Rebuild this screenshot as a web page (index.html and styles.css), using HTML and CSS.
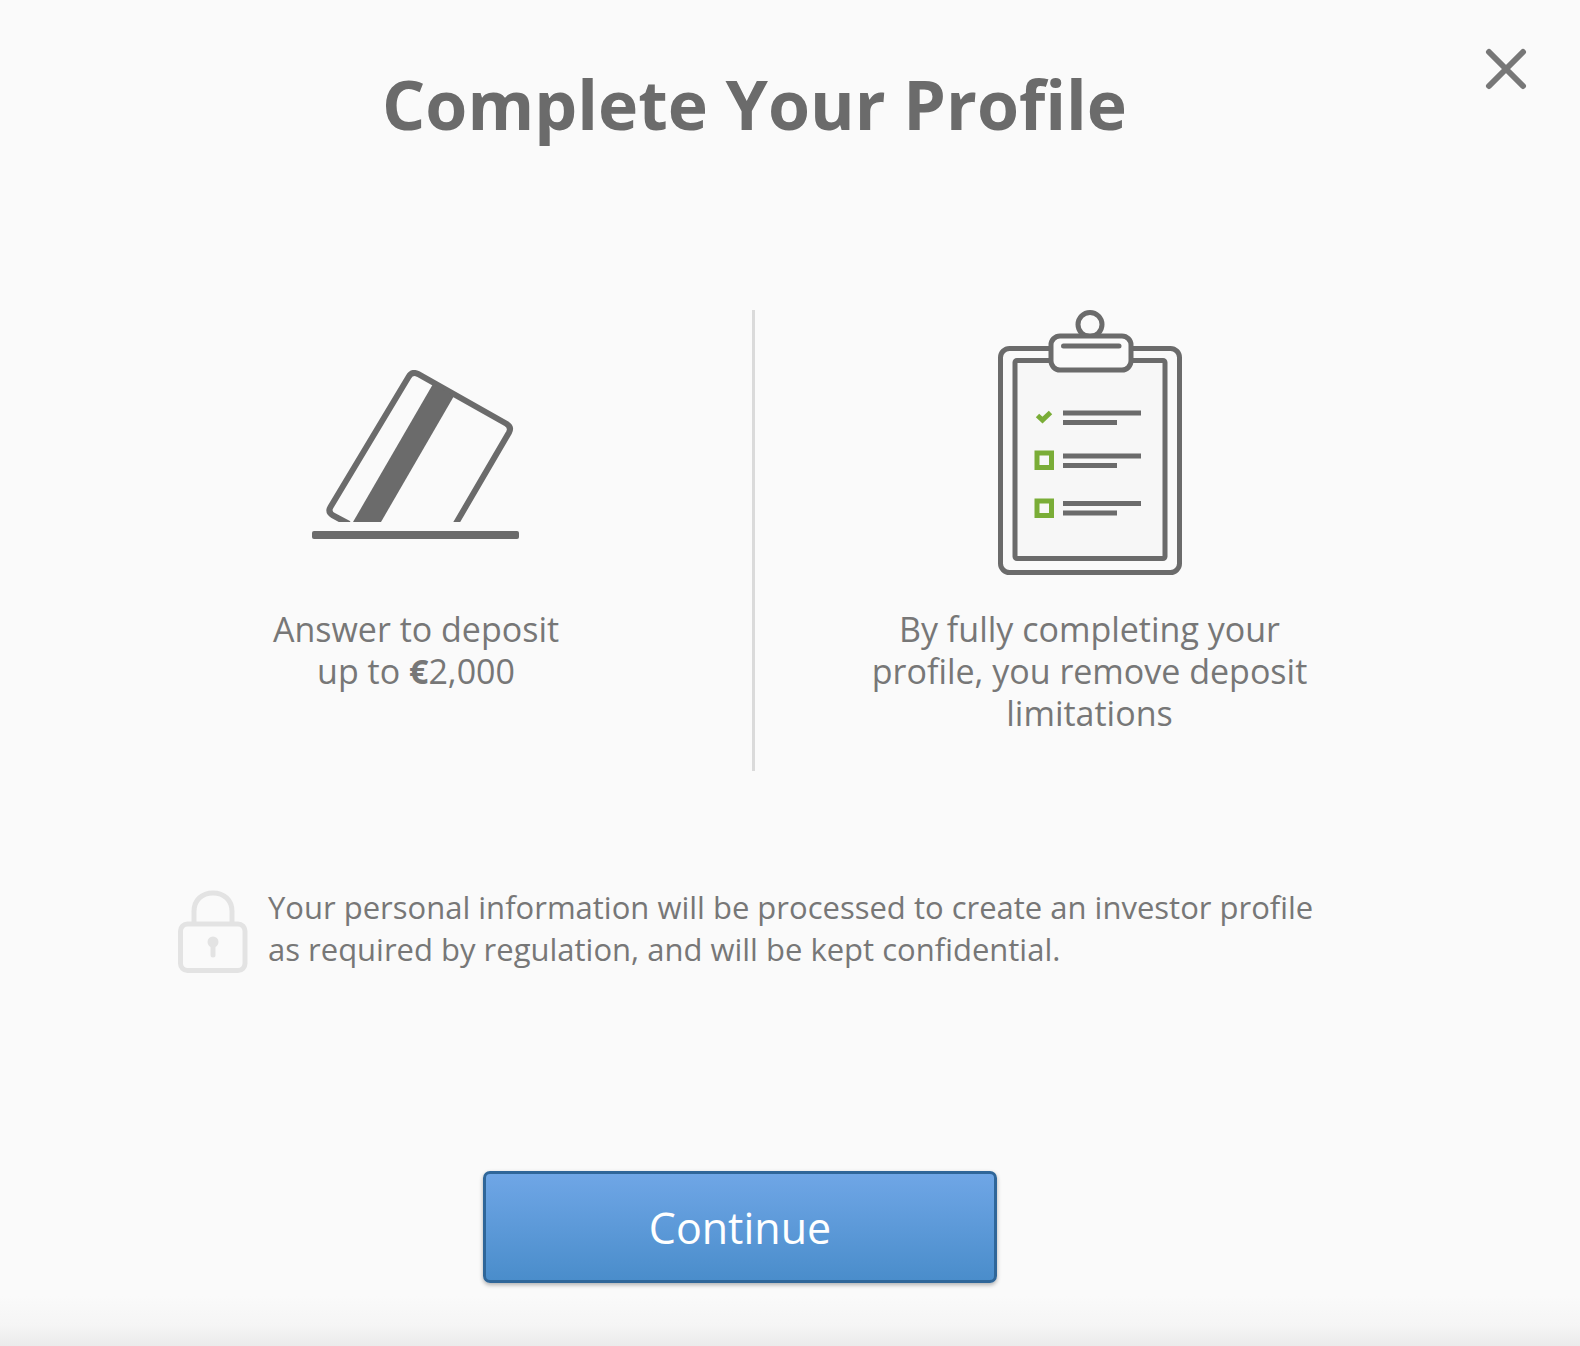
FILE: index.html
```html
<!DOCTYPE html>
<html lang="en">

<head>
    <meta charset="UTF-8">
    <meta name="viewport" content="width=device-width, initial-scale=1.0">
    <title>Complete Your Profile</title>
    <link rel="stylesheet" href="styles.css">
</head>

<body>

    <main class="dialog">
        <header class="dialog-header">
            <h1>Complete Your Profile</h1>
            <button type="button" class="close-btn" aria-label="Close">
                <svg width="42" height="42" viewBox="0 0 42 42">
                    <path d="M4 4L38 38M38 4L4 38" stroke="#777" stroke-width="6" stroke-linecap="round" />
                </svg>
            </button>
        </header>

        <section class="benefits">
            <div class="benefit">
                <div class="benefit-icon">
                    <!-- Card dropping into a slot -->
                    <svg class="card-icon" width="208" height="170" viewBox="13 20 208 170">
                        <clipPath id="slot">
                            <rect x="13" y="10" width="208" height="162" />
                        </clipPath>
                        <path d="M50 174L34 165.5Q28.5 162 31.5 157L109.5 27Q113 21 119 24L207 73.5Q213 77 210 82.500L156 175" fill="none" stroke="#6b6b6b" stroke-width="6" clip-path="url(#slot)" />
                        <path d="M134 34L155 46L82 172H54Z" fill="#6b6b6b" />
                        <rect x="13" y="181" width="207" height="8" rx="2" fill="#6b6b6b" />
                    </svg>
                </div>
                <p>Answer to deposit<br>up to <strong>€</strong>2,000</p>
            </div>

            <div class="benefit">
                <div class="benefit-icon">
                    <!-- Clipboard with a checklist -->
                    <svg width="184" height="266" viewBox="17 10 184 266" fill="none" stroke="#6b6b6b">
                        <rect x="19.5" y="48.5" width="179" height="224" rx="9" stroke-width="5" />
                        <rect x="34" y="60.5" width="150" height="198" rx="2" fill="#f7f7f7" stroke-width="5" />
                        <circle cx="109" cy="24.5" r="12" fill="#fafafa" stroke-width="5" />
                        <rect x="70" y="36" width="80" height="34" rx="9" fill="#fafafa" stroke-width="5" />
                        <path d="M82.5 46H138" stroke-width="5" stroke-linecap="round" />
                        <path d="M82 113H160M82 122.5H136M82 156H160M82 165.5H136M82 203.5H160M82 213H136" stroke-width="5" />
                        <path d="M56.5 115.5L61.5 120L69.5 112.5" stroke="#7aad37" stroke-width="5" />
                        <rect x="56" y="153" width="14.5" height="14.5" stroke="#7aad37" stroke-width="5" />
                        <rect x="56" y="201" width="14.5" height="14.5" stroke="#7aad37" stroke-width="5" />
                    </svg>
                </div>
                <p>By fully completing your<br>profile, you remove deposit<br>limitations</p>
            </div>
        </section>

        <section class="privacy">
            <svg class="lock-icon" width="70" height="84" viewBox="0 0 70 84" fill="none" stroke="#e3e3e3" stroke-width="5">
                <path d="M16 33V21.5C16 10 24 3 35 3S54 10 54 21.5V33" />
                <rect x="2.5" y="34" width="64.5" height="46.5" rx="7" />
                <circle cx="35" cy="52" r="5.5" fill="#e3e3e3" stroke="none" />
                <path d="M35 53V65" stroke-linecap="round" />
            </svg>
            <p>Your personal information will be processed to create an investor profile<br>as required by regulation, and will be kept confidential.</p>
        </section>

        <div class="actions">
            <button type="button" class="continue-btn">Continue</button>
        </div>
    </main>

</body>

</html>
```
FILE: styles.css
```css
* {
    box-sizing: border-box;
}

body {
    margin: 0;
    background-color: #fafafa;
    font-family: "Open Sans", Arial, sans-serif;
    color: #777;
}

h1,
p {
    margin: 0;
}

button {
    font-family: inherit;
    cursor: pointer;
}

svg {
    display: block;
    flex-shrink: 0;
}

.dialog {
    min-height: 100vh;
    background: linear-gradient(to top, #ebebeb, #f5f5f5 20px, #fafafa 50px);
}

.dialog-header {
    display: flex;
    align-items: flex-start;
    padding: 48px 53px 0 24px;
}

.dialog-header h1 {
    flex: 1;
    padding-top: 10px;
    font-size: 68px;
    line-height: 92px;
    font-weight: bold;
    text-align: center;
    color: #6b6b6b;
}

.close-btn {
    padding: 0;
    border: none;
    background: none;
}

.benefits {
    display: grid;
    grid-template-columns: 1fr 1fr;
    margin: 160px 156px 0 80px;
}

.benefit {
    min-height: 461px;
    text-align: center;
}

.benefit + .benefit {
    border-left: 3px solid #dadada;
}

.benefit-icon {
    display: flex;
    justify-content: center;
    align-items: flex-end;
    height: 266px;
    margin-bottom: 32px;
}

.card-icon {
    margin-bottom: 36px;
}

.benefit p {
    font-size: 34px;
    line-height: 42px;
}

.privacy {
    display: flex;
    align-items: flex-start;
    gap: 20px;
    margin: 115px 80px 0 178px;
}

.lock-icon {
    margin-top: 4px;
}

.privacy p {
    font-size: 31px;
    line-height: 42px;
}

.actions {
    display: flex;
    justify-content: center;
    padding: 197px 100px 63px 0;
}

.continue-btn {
    width: 514px;
    height: 112px;
    padding: 0;
    border: 3px solid #2f6699;
    border-radius: 7px;
    background: linear-gradient(#6fa6e6, #4a8dcb);
    box-shadow: 0 2px 4px rgba(0, 0, 0, 0.3);
    color: #fff;
    font-size: 43px;
}
```
